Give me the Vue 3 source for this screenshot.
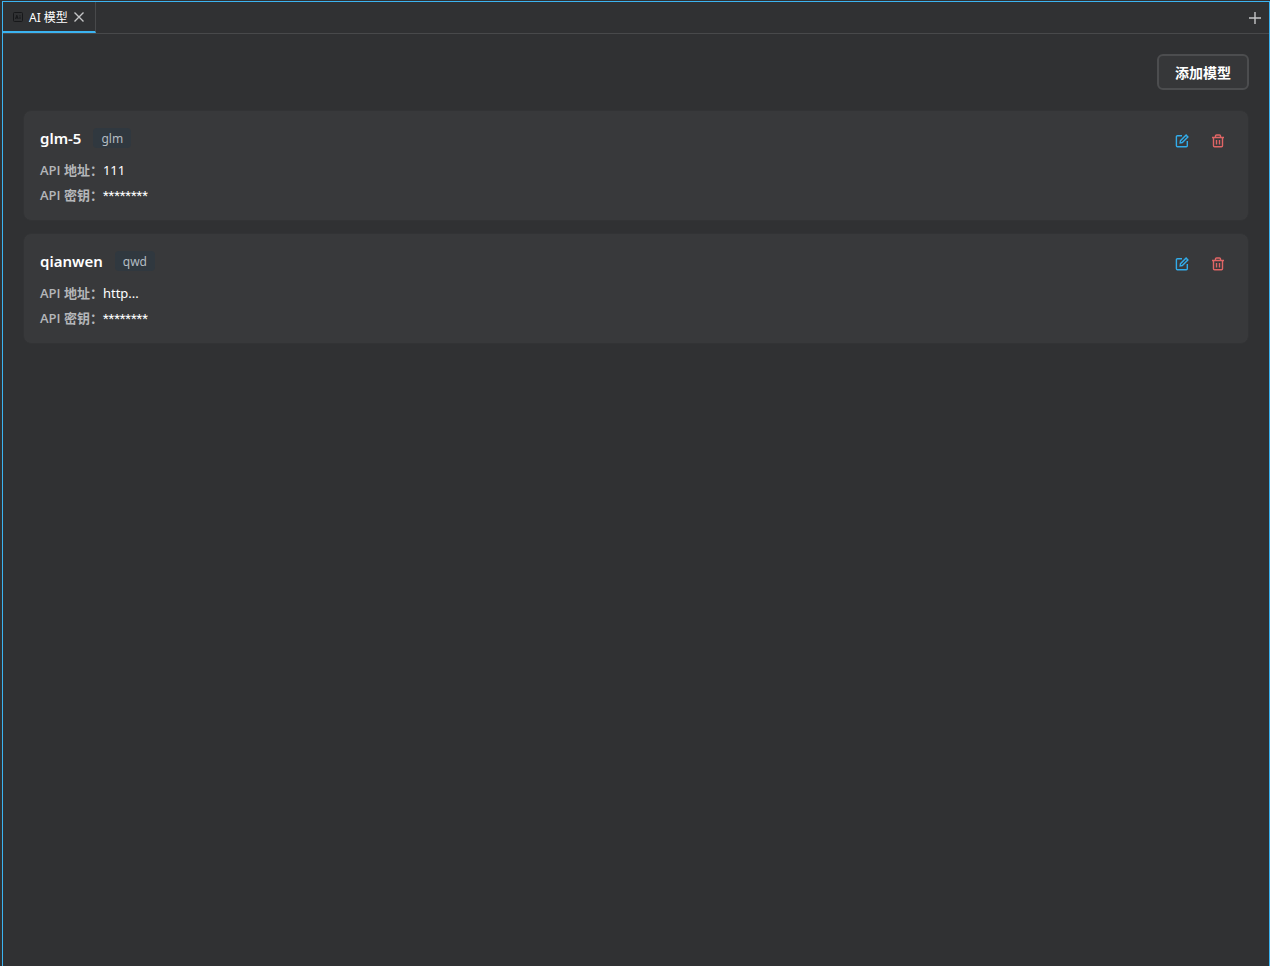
<script setup>
const models = [
  { name: 'glm-5', provider: 'glm', url: '111', key: '********' },
  { name: 'qianwen', provider: 'qwd', url: 'http...', key: '********' },
]
</script>

<template>
  <div class="frame">
    <div class="panel">
      <header class="tabs">
        <div class="tab">
          <svg class="ai" viewBox="0 0 12 12" width="12" height="12" aria-hidden="true">
            <rect x="1.5" y="1.5" width="9" height="9" rx="1" />
            <path d="M3.5 8 4.8 4.2 6.2 8M4 6.8h1.8M8 5.5V8M8 4v.7" />
          </svg>
          <span>AI 模型</span>
          <button class="plain close" aria-label="关闭">
            <svg viewBox="0 0 12 12" width="12" height="12"><path d="M1.5 1.5l9 9M10.5 1.5l-9 9" /></svg>
          </button>
        </div>
        <button class="plain add" aria-label="新建标签">
          <svg viewBox="0 0 12 12" width="12" height="12"><path d="M6 0v12M0 6h12" /></svg>
        </button>
      </header>
      <main>
        <div class="toolbar"><button class="create">添加模型</button></div>
        <ul class="list">
          <li v-for="m in models" :key="m.name" class="card">
            <div class="info">
              <div class="title">
                <h2>{{ m.name }}</h2>
                <span class="tag">{{ m.provider }}</span>
              </div>
              <p><span class="label">API 地址：</span>{{ m.url }}</p>
              <p><span class="label">API 密钥：</span><span class="secret">{{ m.key }}</span></p>
            </div>
            <div class="actions">
              <button class="plain edit" aria-label="编辑">
                <svg viewBox="0 0 14 14" width="14" height="14">
                  <path d="M7 1.7H2.4a1 1 0 0 0-1 1v9a1 1 0 0 0 1 1h8.9a1 1 0 0 0 1-1V7" />
                  <path d="M5.2 8.9l.3-2.2 5.6-5.6 1.8 1.8-5.6 5.6z" />
                </svg>
              </button>
              <button class="plain remove" aria-label="删除">
                <svg viewBox="0 0 14 14" width="14" height="14">
                  <path d="M1 3.5h12M2.5 3.5v8.2a1 1 0 0 0 1 1h7a1 1 0 0 0 1-1V3.5M4.5 3.5V2a1 1 0 0 1 1-1h3a1 1 0 0 1 1 1v1.5M5.5 6v4.5M8.5 6v4.5" />
                </svg>
              </button>
            </div>
          </li>
        </ul>
      </main>
    </div>
  </div>
</template>

<style>
body { background: #303133; }
</style>

<style scoped>
.frame {
  box-sizing: border-box;
  min-height: 100vh;
  padding: 1px 0 0 2px;
  display: flex;
  background: #303133;
  color: #fff;
  font-family: "Noto Sans", "Noto Sans CJK SC", sans-serif;
}
.panel {
  flex: 1;
  border: 1px solid #3bb4f2;
  border-bottom: 0;
}
.tabs {
  display: flex;
  justify-content: space-between;
  height: 31px;
  border-bottom: 1px solid #48494b;
}
.tab {
  box-sizing: border-box;
  display: flex;
  align-items: center;
  height: 31px;
  padding: 0 10px 0 9px;
  border-right: 1px solid #48494b;
  border-bottom: 2px solid #3bb4f2;
  font-size: 12px;
}
.plain {
  display: flex;
  align-items: center;
  justify-content: center;
  padding: 0;
  border: 0;
  background: none;
}
svg { display: block; fill: none; overflow: visible; }
.ai { margin-right: 5px; stroke: #17181a; }
.close { margin-left: 5px; }
.close svg, .add svg { stroke: #c4c5c7; stroke-width: 1.4; }
.add { width: 28px; }
main { padding: 20px; }
.toolbar { display: flex; justify-content: flex-end; margin-bottom: 20px; }
.create {
  height: 36px;
  padding: 0 16px;
  border: 2px solid #4c4d4f;
  border-radius: 6px;
  background: #363739;
  color: #fff;
  font: 600 14px "Noto Sans CJK SC", sans-serif;
}
.list {
  display: flex;
  flex-direction: column;
  gap: 12px;
  margin: 0;
  padding: 0;
  list-style: none;
}
.card {
  display: flex;
  justify-content: space-between;
  padding: 16px 16px 12px;
  border: 1px solid #323335;
  border-radius: 8px;
  background: #38393b;
}
.title { display: flex; align-items: center; gap: 12px; height: 22px; margin-bottom: 9px; }
h2 { margin: 0; font-size: 15px; line-height: 22px; font-weight: 600; }
.tag {
  padding: 2px 8px 0;
  border-radius: 4px;
  background: #30383f;
  color: #b4bcc2;
  font-size: 12px;
  line-height: 18px;
}
p { margin: 0; font-size: 13px; line-height: 25px; }
.label { color: #b4b6b9; font-family: "Open Sans", "Noto Sans CJK SC", sans-serif; font-weight: 600; }
.secret { font-family: Roboto, sans-serif; }
.actions { display: flex; align-items: flex-start; gap: 8px; }
.actions button { width: 28px; height: 28px; }
.edit svg { stroke: #32acea; stroke-width: 1.4; }
.remove svg { stroke: #df6565; stroke-width: 1.4; }
</style>
